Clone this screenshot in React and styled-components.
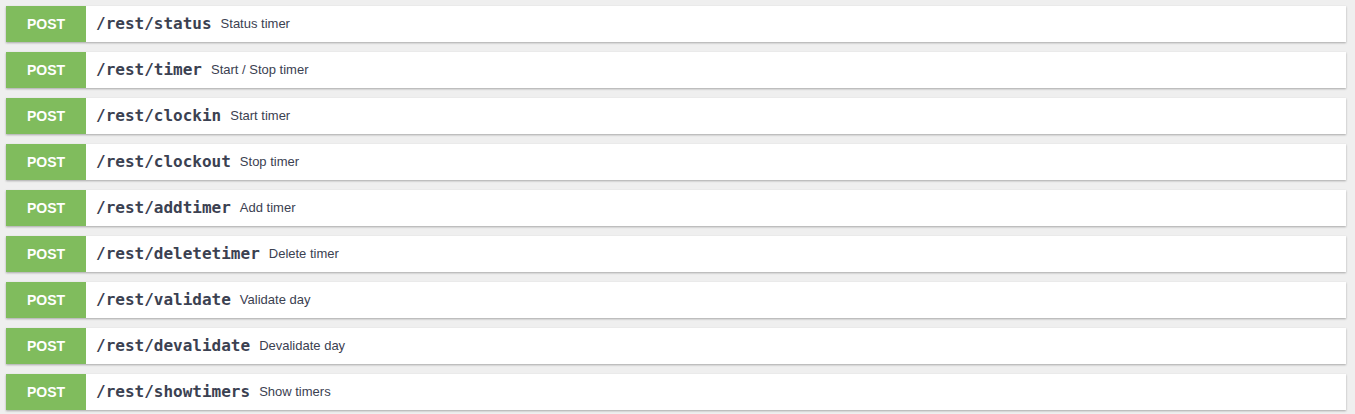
import React from 'react';
import styled, { createGlobalStyle } from 'styled-components';

const endpoints = [
    { path: '/rest/status', summary: 'Status timer' },
    { path: '/rest/timer', summary: 'Start / Stop timer' },
    { path: '/rest/clockin', summary: 'Start timer' },
    { path: '/rest/clockout', summary: 'Stop timer' },
    { path: '/rest/addtimer', summary: 'Add timer' },
    { path: '/rest/deletetimer', summary: 'Delete timer' },
    { path: '/rest/validate', summary: 'Validate day' },
    { path: '/rest/devalidate', summary: 'Devalidate day' },
    { path: '/rest/showtimers', summary: 'Show timers' },
];

const GlobalStyle = createGlobalStyle`
    body {
        margin: 0;
        background: #efefef;
        font-family: 'Liberation Sans', Arial, sans-serif;
    }
`;

const List = styled.div`
    display: flex;
    flex-direction: column;
    gap: 10px;
    padding: 6px 9px 4px 6px;
`;

const Row = styled.div`
    display: flex;
    align-items: center;
    height: 36px;
    background: #fff;
    box-shadow: 0 1px 2px rgba(0, 0, 0, .3);
`;

const Method = styled.span`
    display: flex;
    align-items: center;
    justify-content: center;
    align-self: stretch;
    width: 80px;
    flex-shrink: 0;
    background: ${props => props.color || '#80bc5d'};
    color: #fff;
    font-weight: bold;
    font-size: 14px;
`;

const Path = styled.span`
    margin: 0 0 2px 10px;
    font-family: 'DejaVu Sans Mono', monospace;
    font-weight: bold;
    font-size: 16px;
    color: #3b4151;
`;

const Summary = styled.span`
    margin: 0 0 2px 9px;
    font-size: 13px;
    color: #3b4151;
`;

const App = () => {
    return (
        <>
            <GlobalStyle />
            <List>
                {endpoints.map(e => (
                    <Row key={e.path}>
                        <Method>POST</Method>
                        <Path>{e.path}</Path>
                        <Summary>{e.summary}</Summary>
                    </Row>
                ))}
            </List>
        </>
    );
}

export default App;
